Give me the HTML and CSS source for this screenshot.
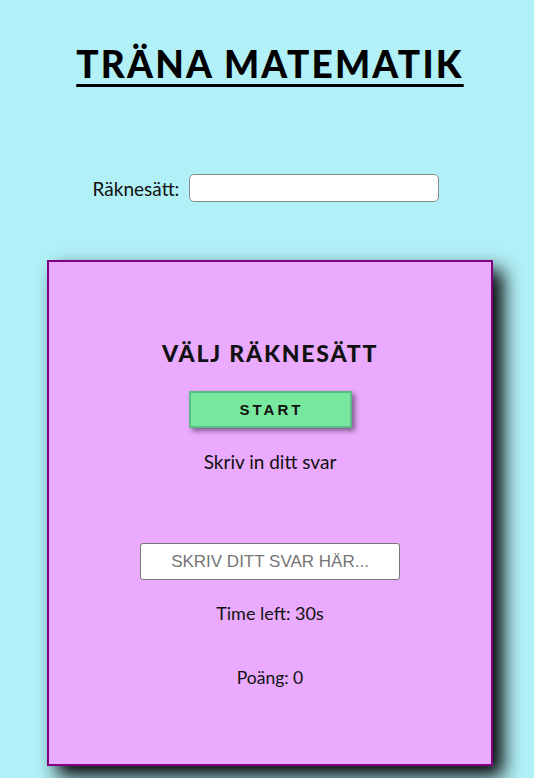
FILE: index.html
```html
<!DOCTYPE html>
<html lang="sv">
<head>
<meta charset="utf-8">
<title>Träna matematik</title>
<link rel="stylesheet" href="styles.css">
</head>
<body>
  <h1 class="title">TRÄNA MATEMATIK</h1>
  <div class="mode-row">
    <label class="mode-label" for="mode">Räknesätt:</label>
    <input class="mode-input" id="mode" type="text">
  </div>
  <section class="card">
    <h2 class="card-title">VÄLJ RÄKNESÄTT</h2>
    <button class="start-btn" type="button">START</button>
    <p class="question">Skriv in ditt svar</p>
    <input class="answer-input" type="text" placeholder="SKRIV DITT SVAR HÄR...">
    <p class="timer">Time left: 30s</p>
    <p class="score">Poäng: 0</p>
  </section>
</body>
</html>
```
FILE: styles.css
```css
html, body {
  height: 100%;
}
body {
  margin: 0;
  padding: 0 0 0 6px;
  background: #b2f0f7;
  font-family: Lato, "Open Sans", sans-serif;
  color: #111;
  overflow: hidden;
  box-sizing: border-box;
}
.title {
  margin: 42px 0 0;
  font-size: 37px;
  line-height: 44px;
  font-weight: 900;
  letter-spacing: 2.2px;
  text-align: center;
  text-decoration: underline;
  text-decoration-thickness: 3px;
  text-underline-offset: 6px;
  color: #000;
}
.mode-row {
  margin-top: 88px;
  display: flex;
  justify-content: center;
  align-items: center;
  gap: 10px;
  padding-right: 8px;
}
.mode-label {
  font-size: 19px;
}
.mode-input {
  width: 250px;
  height: 28px;
  box-sizing: border-box;
  border: 1px solid #8a8a8a;
  border-radius: 5px;
  background: #fff;
  margin: 0;
}
.card {
  margin: 58px auto 0;
  width: 446px;
  height: 506px;
  box-sizing: border-box;
  border: 2px solid #800080;
  background: #eaaafd;
  box-shadow: 10px 10px 18px #000;
  display: flex;
  flex-direction: column;
  align-items: center;
}
.card-title {
  margin: 76px 0 0;
  font-size: 23px;
  line-height: 30px;
  font-weight: 900;
  letter-spacing: 1.8px;
}
.start-btn {
  margin-top: 23px;
  width: 163px;
  height: 37px;
  box-sizing: border-box;
  background: #78e89f;
  border: 2px solid #5dbb88;
  box-shadow: 3px 3px 5px rgba(0, 0, 0, 0.45);
  font-family: "Liberation Sans", Arial, sans-serif;
  font-weight: 700;
  font-size: 15px;
  letter-spacing: 3px;
  color: #111;
  padding: 0 0 0 3px;
}
.question,
.timer,
.score {
  font-size: 18px;
  line-height: 24px;
  margin: 0;
}
.question {
  margin-top: 22px;
  font-size: 19px;
}
.answer-input {
  margin-top: 69px;
  width: 260px;
  height: 37px;
  box-sizing: border-box;
  border: 1px solid #777;
  border-radius: 3px;
  background: #fff;
  text-align: center;
  font-family: "Liberation Sans", Arial, sans-serif;
  font-size: 17px;
}
.answer-input::placeholder {
  color: #757575;
}
.timer {
  margin-top: 21px;
}
.score {
  margin-top: 41px;
  font-size: 17.5px;
}
```
